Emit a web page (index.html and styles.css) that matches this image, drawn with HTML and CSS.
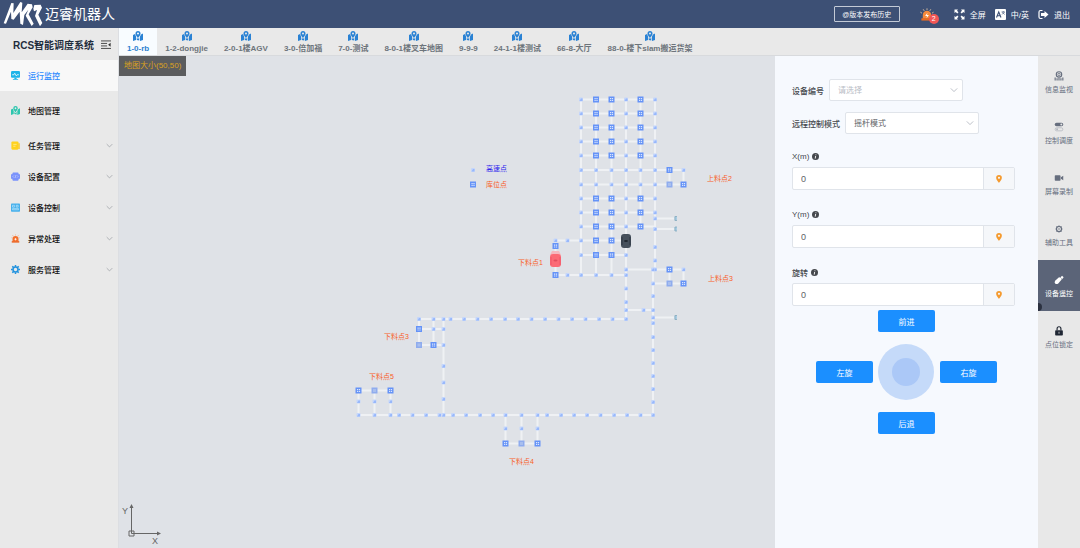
FILE: index.html
```html
<!DOCTYPE html>
<html lang="zh-CN">
<head>
<meta charset="utf-8">
<title>RCS智能调度系统</title>
<link rel="stylesheet" href="styles.css">
</head>
<body>
<svg class="defs" aria-hidden="true">
  <symbol id="i-map" viewBox="0 0 20 20"><path fill="currentColor" d="M10 0a5 5 0 0 0-5 5c0 3.500 5 9 5 9s5-5.500 5-9a5 5 0 0 0-5-5zm0 3a2 2 0 1 1 0 4 2 2 0 0 1 0-4zM0 8l4-2 2 5v7l-6 2zM7.500 13 10 16l2.500-3v6l-5-1zM14 11l2-4 4-2v13l-6 2z"/></symbol>
  <symbol id="i-down" viewBox="0 0 10 10"><path d="M1 3l4 4 4-4" fill="none" stroke="currentColor" stroke-width="1.200"/></symbol>
  <symbol id="i-info" viewBox="0 0 10 10"><circle cx="5" cy="5" r="5" fill="currentColor"/><path d="M5.600 2v1.200M5.200 4.300 4.600 8" stroke="#fff" stroke-width="1.300"/></symbol>
  <symbol id="i-pin" viewBox="0 0 10 14"><path fill="currentColor" fill-rule="evenodd" d="M5 0a5 5 0 0 0-5 5c0 3.500 5 9 5 9s5-5.500 5-9a5 5 0 0 0-5-5zm0 3.200a1.800 1.800 0 1 1 0 3.600 1.800 1.800 0 0 1 0-3.600z"/></symbol>
</svg>

<header class="topbar">
  <div class="brand">
    <svg class="logo" viewBox="10 2 120 78" aria-hidden="true"><path fill="#fff" d="M12 69 35 8 42 9 41 38 62 5 68 7 66 36 84 10 97 12 99 21 87 42 102 70 96 77 78 46 86 28 74 44 70 74 62 70 60 34 42 58 35 56 34 34 19 70zM104 14 123 13 127 22 116 43 128 68 121 78 106 47 112 29 103 33 101 25z"/></svg>
    <span class="brand-name">迈睿机器人</span>
  </div>
  <button class="version" type="button">@版本发布历史</button>
  <button class="alarm" type="button" aria-label="告警">
    <svg viewBox="0 0 30 26"><path d="M6 22v-8a9 9 0 0 1 18 0v8z" fill="#f58a3c"/><path d="M3 21h24v5H3z" fill="#e96a22"/><path d="M16 9l-5 7h4l-1 5 5-7h-4z" fill="#fff"/><path d="M15 0v3M7 2l2 3M23 2l-2 3M1 8l3 2M29 8l-3 2" stroke="#e8c9a8" stroke-width="2"/></svg>
    <span class="badge">2</span>
  </button>
  <button class="top-action" type="button"><svg viewBox="0 0 22 22"><path fill="#fff" d="M1 1h7L6 3.500 9 6.500 6.500 9 3.500 6 1 8zM21 1v7l-2.500-2-3 3L13 6.500l3-3L14 1zM1 21v-7l2.500 2 3-3L9 15.500l-3 3L8 21zM21 21h-7l2-2.500-3-3 2.500-2.500 3 3 2.500-2z"/></svg>全屏</button>
  <button class="top-action" type="button"><svg viewBox="0 0 22 22"><rect width="22" height="22" rx="2" fill="#fff"/><path d="M3 17 7.500 6 12 17M4.500 13.500h6" fill="none" stroke="#3d5075" stroke-width="2.200"/><path d="M13 6h7M16.500 4v2M14 11l5-5M14.500 7l5 4" stroke="#3d5075" stroke-width="1.200"/></svg>中/英</button>
  <button class="top-action" type="button"><svg viewBox="0 0 22 22"><path d="M9 3H5a3 3 0 0 0-3 3v10a3 3 0 0 0 3 3h4" fill="none" stroke="#fff" stroke-width="2.400"/><path d="M13 4l8 7-8 7v-4H6V8h7z" fill="#fff"/></svg>退出</button>
</header>

<div class="shell">
  <nav class="side">
    <div class="side-title"><h1>RCS智能调度系统</h1><svg viewBox="0 0 28 24"><path d="M0 2h28M0 9h17M0 16h17M0 23h28" stroke="#333" stroke-width="2.400"/><path d="M27 7v11l-7-5.500z" fill="#333"/></svg></div>
    <a class="item active gap" href="#monitor"><svg class="ico" viewBox="0 0 24 24"><rect width="24" height="18" rx="3" fill="#1fb4e8"/><path d="M9 18h6v3h4v2H5v-2h4z" fill="#1fb4e8"/><path d="M3 10h5l2-4 4 7 2-3h5" fill="none" stroke="#fff" stroke-width="2"/></svg>运行监控</a>
    <a class="item gap" href="#map"><svg class="ico teal"><use href="#i-map"/></svg>地图管理</a>
    <a class="item" href="#task"><svg class="ico" viewBox="0 0 24 24"><rect x="1" y="1" width="19" height="22" rx="3" fill="#ffd21f"/><path d="M20 6h3v15h-3z" fill="#ffc400"/><path d="M6 9h9M6 14h6" stroke="#fff0a0" stroke-width="2"/></svg>任务管理<svg class="chev"><use href="#i-down"/></svg></a>
    <a class="item" href="#config"><svg class="ico" viewBox="0 0 24 24"><path d="M5 1h14l2 5h3v12h-3l-2 5H5l-2-5H0V6h3z" fill="#7b93fb"/><path d="M8 9l-3 3 3 3M16 9l3 3-3 3M13 8l-2 8" fill="none" stroke="#d5dcff" stroke-width="1.500"/></svg>设备配置<svg class="chev"><use href="#i-down"/></svg></a>
    <a class="item" href="#control"><svg class="ico" viewBox="0 0 24 24"><rect y="1" width="24" height="22" rx="2" fill="#46b0ec"/><path d="M4 6h5v5H4zM14 6h5v5h-5zM4 15h16v3H4z" fill="none" stroke="#d4f0ff" stroke-width="1.500"/></svg>设备控制<svg class="chev"><use href="#i-down"/></svg></a>
    <a class="item" href="#error"><svg class="ico" viewBox="0 0 24 24"><path d="M4 20v-7a8 8 0 0 1 16 0v7z" fill="#f4702c"/><path d="M2 19h20v4H2z" fill="#ec6320"/><path d="M12 1v3M4 3l2 3M20 3l-2 3M1 10h3M20 10h3" stroke="#f6a77c" stroke-width="1.800"/><path d="M12 11v6M9 14h6" stroke="#fff" stroke-width="2"/></svg>异常处理<svg class="chev"><use href="#i-down"/></svg></a>
    <a class="item" href="#service"><svg class="ico" viewBox="0 0 24 24"><circle cx="12" cy="12" r="6.500" fill="none" stroke="#2493de" stroke-width="4"/><path d="M12 0v5M12 19v5M0 12h5M19 12h5M3.500 3.500 7 7M17 17l3.500 3.500M20.500 3.500 17 7M7 17l-3.500 3.500" stroke="#2493de" stroke-width="4"/></svg>服务管理<svg class="chev"><use href="#i-down"/></svg></a>
  </nav>

  <div class="content">
    <nav class="tabs">
      <a class="tab active" href="#t1"><svg><use href="#i-map"/></svg>1-0-rb</a>
      <a class="tab" href="#t2"><svg><use href="#i-map"/></svg>1-2-dongjie</a>
      <a class="tab" href="#t3"><svg><use href="#i-map"/></svg>2-0-1楼AGV</a>
      <a class="tab" href="#t4"><svg><use href="#i-map"/></svg>3-0-倍加福</a>
      <a class="tab" href="#t5"><svg><use href="#i-map"/></svg>7-0-测试</a>
      <a class="tab" href="#t6"><svg><use href="#i-map"/></svg>8-0-1楼叉车地图</a>
      <a class="tab" href="#t7"><svg><use href="#i-map"/></svg>9-9-9</a>
      <a class="tab" href="#t8"><svg><use href="#i-map"/></svg>24-1-1楼测试</a>
      <a class="tab" href="#t9"><svg><use href="#i-map"/></svg>66-8-大厅</a>
      <a class="tab" href="#t10"><svg><use href="#i-map"/></svg>88-0-楼下slam搬运货架</a>
    </nav>
    <div class="work">
      <main class="map">
        <span class="map-size">地图大小(50,50)</span>
        <svg class="canvas" viewBox="119 56 656 492" role="img" aria-label="地图">
          <defs>
            <marker id="dot" markerUnits="userSpaceOnUse" markerWidth="6" markerHeight="6" refX="3" refY="3"><rect x="1" y="1" width="4" height="4" rx="1" fill="#c4d6fb"/><path d="M1.500 4.500 3 2h1.500v2.500z" fill="#98b8fb"/></marker>
            <marker id="bin" markerUnits="userSpaceOnUse" markerWidth="7" markerHeight="7" refX="3.500" refY="3.500"><path fill="#6593f7" d="M.5.5h6v6h-6z"/><path fill="#dbe6fd" d="M2 2h1.200v1.200H2zM3.900 2h1.200v1.200H3.900zM2 3.900h1.200v1.200H2zM3.900 3.900h1.200v1.200H3.900z"/></marker>
            <marker id="used" markerUnits="userSpaceOnUse" markerWidth="7" markerHeight="7" refX="3.500" refY="3.500"><path fill="#8facee" d="M.5.5h6v6h-6z"/><path fill="#a9bfee" d="M2 2h3v3H2z"/></marker>
            <marker id="charger" markerUnits="userSpaceOnUse" markerWidth="6" markerHeight="7" refX="3" refY="3.500"><path fill="#a9cde4" d="M2 1.500h2.500v4H2z"/><path d="M4.500 1.500H2.500v4h2" fill="none" stroke="#86a9bb" stroke-width=".8"/></marker>
          </defs>
          <path class="track" d="M581 99.500H655M581 113.500H655M581 127.500H655M581 141.500H655M581 155.500H655M581 170H683.500V184.500M581 184.500H683.500M669.500 170V184.500M581 198.500H655M581 212.500H655M581 226.500H655M555.500 275V240.500H626M581 255H626M555.500 275H626M581 99.500V275M596 99.500V275M611.500 99.500V275M626 99.500V319H419V345H443.500M640.500 99.500V226.500M655 99.500V269.500M655 218.500H675M655 229H675M626 269.500H683.500V283.500H653M669.500 269.500V283.500M653 269.500V415H358.500V390.500H390.500V415M374.500 390.500V415M626 310H653M653 317.500H675M419 329H443.500M433.500 319V345M443.500 319V415M505.500 415V443.500H537.500V415M521.500 415V443.500"/>
          <path class="dots" d="M581 99.500V113.500V127.500V141.500V155.500V170V184.500V198.500V212.500V226.500V240.500V255V275M626 99.500V113.500V127.500V141.500V155.500V170V184.500V198.500V212.500V226.500M655 99.500V113.500V127.500V141.500V155.500V170V184.500V198.500V212.500V218.500V229V247V260.500V269.500M596 170H611.500H640.500M596 184.500H611.500H640.500M683.500 170M555.500 240.500H567.500M567.500 275H596H611.500H626M626 255V269.500V288.500V302V310V319M653 269.500V283.500V296V310V317.500V323V337V350V363V376V389V402V415M643.500 310M683.500 269.500M419 319H433.500H443.500H450.500H464H477.500H491H505H518H531.500H545H558.500H572H585.500H599H612.500M433.500 329H443.500V345V366V382.500V399V415M358.500 401.500V415M374.500 401.500V415M390.500 401.500V415H399H412.500H426H439.500H453H466H480H493H505.500H521.500H537.500H547H561H574H587H600.500H614H627H640.500M505.500 428.500H521.500H537.500M473 170"/>
          <path class="bins" d="M596 99.500V113.500V127.500V141.500V155.500V198.500V212.500V226.500V240.500V255M611.500 99.500V113.500V127.500V141.500V155.500V198.500V212.500V226.500V240.500V255M640.500 99.500V113.500V127.500V141.500V155.500V198.500V212.500V226.500M669.500 170M683.500 184.500M669.500 269.500M683.500 283.500M555.500 246V275M419 329M433.500 345M358.500 390.500H390.500M505.500 443.500H537.500M473 184.500"/>
          <path class="used" d="M669.500 184.500V283.500M419 345M374.500 390.500M521.500 443.500"/>
          <path class="chargers" d="M675.500 218.500V229V317.500"/>
          <rect x="621" y="234" width="10" height="14" rx="3" fill="#46505c"/><path d="M622 237v8M630 237v8" stroke="#2f3742"/><ellipse cx="626" cy="241" rx="2" ry="1" fill="#20262f"/>
          <path d="M552 251h7l2 4h-11z" fill="#f5b9c0"/><rect x="550" y="254" width="11" height="13" rx="3" fill="#fb6b76"/><path d="M551 257v8M560 257v8" stroke="#f0596a"/><ellipse cx="555.500" cy="260.500" rx="2" ry="1" fill="#e24e5e"/>
          <text class="fast" x="486" y="171">高速点</text>
          <text x="486" y="187">库位点</text>
          <text x="707" y="181">上料点2</text>
          <text x="518" y="265">下料点1</text>
          <text x="708" y="281">上料点3</text>
          <text x="384" y="339">下料点3</text>
          <text x="369" y="379">下料点5</text>
          <text x="509" y="464">下料点4</text>
          <g class="axis"><path d="M131.500 533.500V508M131.500 533.500H159M129 531h5v5h-5z"/><path class="tip" d="M129.500 508 131.500 504 133.500 508zM157 531.500 161 533.500 157 535.500z"/><text x="122" y="514">Y</text><text x="152" y="544">X</text></g>
        </svg>
      </main>

      <section class="panel">
        <div class="row"><label for="dev">设备编号</label><span class="select"><select id="dev" class="empty"><option>请选择</option></select><svg><use href="#i-down"/></svg></span></div>
        <div class="row"><label for="mode">远程控制模式</label><span class="select"><select id="mode"><option>摇杆模式</option></select><svg><use href="#i-down"/></svg></span></div>
        <div class="field"><label for="x">X(m) <svg><use href="#i-info"/></svg></label><div class="group"><input id="x" type="text" value="0"><button type="button" aria-label="选取X"><svg><use href="#i-pin"/></svg></button></div></div>
        <div class="field"><label for="y">Y(m) <svg><use href="#i-info"/></svg></label><div class="group"><input id="y" type="text" value="0"><button type="button" aria-label="选取Y"><svg><use href="#i-pin"/></svg></button></div></div>
        <div class="field"><label for="r">旋转 <svg><use href="#i-info"/></svg></label><div class="group"><input id="r" type="text" value="0"><button type="button" aria-label="选取角度"><svg><use href="#i-pin"/></svg></button></div></div>
        <div class="pad">
          <button class="go up" type="button">前进</button>
          <button class="go left" type="button">左旋</button>
          <div class="stick"><span></span></div>
          <button class="go right" type="button">右旋</button>
          <button class="go down" type="button">后退</button>
        </div>
      </section>

      <aside class="tools">
        <button type="button"><svg viewBox="0 0 26 26"><circle cx="13" cy="9" r="7" fill="none" stroke="currentColor" stroke-width="3"/><circle cx="13" cy="9" r="3" fill="none" stroke="currentColor" stroke-width="2"/><path d="M3 25v-8M8 25v-6M13 25v-7M18 25v-6M23 25v-8" stroke="currentColor" stroke-width="3"/></svg>信息监视</button>
        <button type="button"><svg viewBox="0 0 26 26"><rect x="2" y="2" width="22" height="9" rx="4.500" fill="currentColor"/><circle cx="19" cy="6.500" r="2.500" fill="#e8e8e8"/><rect x="3" y="15" width="20" height="8" rx="4" fill="none" stroke="#b3b7bf" stroke-width="2"/><circle cx="8" cy="19" r="2.500" fill="#b3b7bf"/></svg>控制调度</button>
        <button type="button"><svg viewBox="0 0 26 26"><rect x="2" y="6" width="15" height="14" rx="2" fill="currentColor"/><path d="M18 11l6-4v12l-6-4z" fill="currentColor"/></svg>屏幕录制</button>
        <button type="button"><svg viewBox="0 0 26 26"><circle cx="13" cy="13" r="6.500" fill="none" stroke="currentColor" stroke-width="3"/><circle cx="13" cy="13" r="2" fill="currentColor"/><path d="M13 4v3M13 19v3M4 13h3M19 13h3M6.500 6.500l2 2M17.500 17.500l2 2M19.500 6.500l-2 2M8.500 17.500l-2 2" stroke="currentColor" stroke-width="3"/></svg>辅助工具</button>
        <button class="active" type="button"><svg viewBox="0 0 26 26"><path d="M3 15 13 6q6 0 7 6l-9 10q-4 3-8 0-3-3 0-7z" fill="#fff"/><path d="M17 6l4-4 4 4-4 5z" fill="#fff"/></svg>设备遥控</button>
        <button type="button"><svg class="dark" viewBox="0 0 26 26"><rect x="3" y="11" width="20" height="14" rx="2" fill="currentColor"/><path d="M8 11V7a5 5 0 0 1 10 0v4" fill="none" stroke="currentColor" stroke-width="3"/><path d="M13 15v5" stroke="#e8e8e8" stroke-width="2"/></svg>点位锁定</button>
        <span class="handle"></span>
      </aside>
    </div>
  </div>
</div>
</body>
</html>
```
FILE: styles.css
```css
* { box-sizing: border-box; }
body {
  margin: 0;
  min-height: 100vh;
  display: flex;
  flex-direction: column;
  font-family: "Liberation Sans", "Noto Sans CJK SC", sans-serif;
  font-size: 8px;
  color: #303133;
  background: #dfe2e7;
}
button, input, select { font: inherit; color: inherit; margin: 0; padding: 0; border: 0; background: none; }
a { color: inherit; text-decoration: none; }
.defs { position: absolute; width: 0; height: 0; }

.topbar { height: 28px; display: flex; align-items: center; padding-right: 10px; background: #3d5075; color: #fff; }
.brand { display: flex; align-items: center; gap: 2px; margin-right: auto; padding-left: 3px; }
.logo { width: 40px; height: 26px; }
.brand-name { font-size: 14px; line-height: 20px; }
.version { width: 66px; height: 16px; margin-right: 20px; border: 1px solid #c3cad6; border-radius: 1px; font-size: 7px; }
.alarm { position: relative; width: 14px; height: 14px; margin-right: 11px; }
.alarm svg { display: block; width: 14px; height: 13px; }
.badge { position: absolute; left: 9px; top: 7px; width: 10px; height: 10px; border-radius: 5px; background: #f25656; font-size: 7px; line-height: 10px; }
.top-action { display: flex; align-items: center; gap: 5px; margin-left: 9px; }
.top-action svg { width: 11px; height: 11px; }

.shell { flex: 1; display: flex; min-height: 0; }
.side { width: 119px; flex: none; background: #e9e9e9; border-right: 1px solid #dcdee2; }
.side-title { height: 32px; display: flex; align-items: center; gap: 7px; padding-left: 13px; }
.side-title h1 { margin: 0; font-size: 10px; white-space: nowrap; color: #1f2d3d; }
.side-title svg { width: 10px; height: 9px; }
.item { height: 31px; display: flex; align-items: center; padding: 0 5px 0 11px; font-weight: 500; color: #111; }
.item.gap { margin-bottom: 4px; }
.item.active { background: #f8f8f8; color: #2f8bff; }
.ico { width: 9px; height: 9px; margin-right: 8px; }
.teal { color: #2cc6ae; }
.chev { width: 7px; height: 7px; margin-left: auto; color: #a5a8ad; }

.content { flex: 1; min-width: 0; display: flex; flex-direction: column; }
.tabs { height: 28px; display: flex; background: #e9e9e9; border-bottom: 1px solid #d8dadd; }
.tab { display: flex; flex-direction: column; align-items: center; gap: 2px; padding: 3px 8px 0; line-height: 11px; font-weight: bold; white-space: nowrap; color: #6d747b; }
.tab svg { width: 10px; height: 10px; color: #2a82d4; }
.tab.active { background: #f8fcff; color: #2c7fd0; }

.work { flex: 1; display: flex; min-height: 0; }
.map { flex: 1; min-width: 0; position: relative; background: #dfe2e7; }
.map-size { position: absolute; left: 0; top: 0; padding: 0 5px; line-height: 20px; background: #5b5c5e; color: #dba21f; }
.canvas { display: block; width: 100%; height: 100%; font-size: 7px; fill: #f9601f; }
.track { fill: none; stroke: #eff1f4; stroke-width: 2px; }
.dots, .bins, .used, .chargers { fill: none; }
.dots { marker: url(#dot); }
.bins { marker: url(#bin); }
.used { marker: url(#used); }
.chargers { marker: url(#charger); }
.fast { fill: #2d22ee; }
.axis { fill: none; stroke: #666; }
.axis text { fill: #666; stroke: none; font-size: 9px; }
.axis .tip { fill: #666; stroke: none; }

.panel { width: 263px; flex: none; padding: 23px 23px 0 17px; background: #f6f9fe; color: #45484d; }
.row { display: flex; align-items: center; gap: 5px; height: 22px; margin-bottom: 11px; font-weight: 500; }
.select { position: relative; width: 134px; }
.select select { width: 100%; height: 22px; display: block; padding: 0 8px; appearance: none; border: 1px solid #e0e4ea; border-radius: 2px; background: #fff; color: #606266; font-weight: 400; }
.select select.empty { color: #b9bdc6; }
.select svg { position: absolute; right: 5px; top: 7px; width: 8px; height: 8px; color: #b9bdc6; }
.field { margin-bottom: 13px; }
.field label { display: flex; align-items: center; gap: 3px; height: 22px; font-weight: 500; }
.field label svg { width: 7px; height: 7px; }
.group { display: flex; height: 23px; border: 1px solid #e0e4ea; border-radius: 2px; background: #fff; }
.group input { flex: 1; min-width: 0; padding: 0 8px; font-size: 9px; color: #606266; }
.group button { width: 31px; display: grid; place-items: center; border-left: 1px solid #e0e4ea; background: #f5f7fa; color: #f59a2e; }
.group svg { width: 6px; height: 8px; }
.pad { display: grid; grid-template-columns: 57px 57px 57px; grid-template-rows: 22px 56px 22px; gap: 12px 5px; justify-content: center; align-items: center; padding-left: 6px; margin-top: -9px; }
.go { height: 22px; border-radius: 2px; background: #1b8fff; color: #fff; }
.up, .down { grid-column: 2; }
.left { grid-column: 1; }
.stick { width: 56px; height: 56px; border-radius: 50%; display: grid; place-items: center; background: #c5daf9; }
.stick span { width: 28px; height: 28px; border-radius: 50%; background: #abc8f7; }

.tools { position: relative; width: 42px; flex: none; background: #e8e8e8; }
.tools button { width: 100%; height: 51px; display: flex; flex-direction: column; align-items: center; justify-content: center; gap: 4px; padding-top: 3px; font-size: 7px; line-height: 10px; color: #666e7e; }
.tools svg { width: 10px; height: 10px; }
.tools .dark { color: #1f2633; }
.tools .active { background: #5b6478; color: #fff; }
.handle { position: absolute; left: 0; top: 247px; width: 4px; height: 8px; border-radius: 0 4px 4px 0; background: #2b3140; }
```
